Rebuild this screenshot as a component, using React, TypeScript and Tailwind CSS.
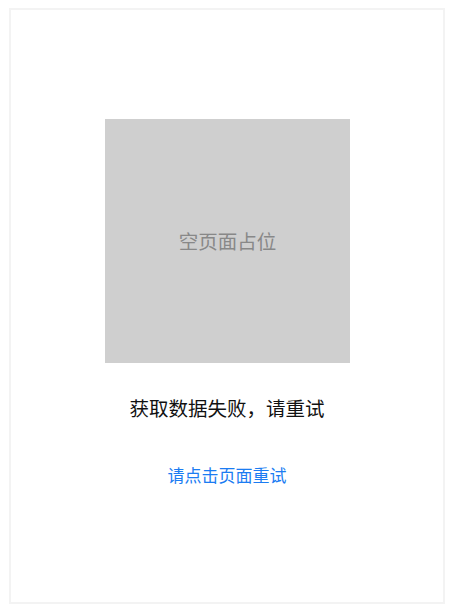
import React from "react";

export default function App() {
  return (
    <div className="w-[458px] h-[612px] bg-white pt-[8px] pl-[9px]" style={{ fontFamily: '"Noto Sans CJK SC", "Noto Sans", sans-serif' }}>
      <div className="w-[436px] h-[596px] border-2 border-[#f3f3f3] flex flex-col items-center pt-[109px]">
        <div className="w-[245px] h-[244px] bg-[#cfcfcf] flex items-center justify-center ml-[1px]">
          <span className="text-[19.5px] leading-[28px] text-[#888888]">空页面占位</span>
        </div>
        <div className="mt-[31px] text-[19.5px] leading-[28px] text-[#111111]">获取数据失败，请重试</div>
        <div className="mt-[41px] text-[17px] leading-[24px] text-[#1b7cf2] cursor-pointer">请点击页面重试</div>
      </div>
    </div>
  );
}
